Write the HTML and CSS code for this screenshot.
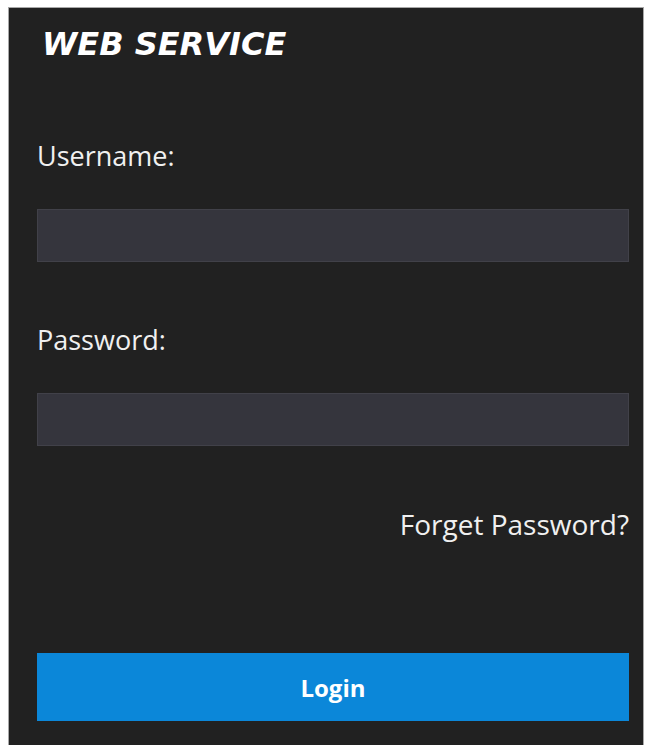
FILE: index.html
```html
<!DOCTYPE html>
<html lang="en">
<head>
    <meta charset="UTF-8">
    <meta name="viewport" content="width=device-width, initial-scale=1.0">
    <title>WEB SERVICE</title>
    <link rel="stylesheet" href="styles.css">
</head>
<body>

    <div class="login-panel">
        <div class="title">WEB SERVICE</div>

        <label for="username">Username:</label>
        <input type="text" id="username">

        <label for="password">Password:</label>
        <input type="password" id="password">

        <div class="forget-row">
            <a href="#" class="forget-link">Forget Password?</a>
        </div>

        <button class="login-btn">Login</button>
    </div>

</body>
</html>
```

FILE: styles.css
```css
body {
    margin: 0;
    background-color: #ffffff;
    font-family: 'Open Sans', 'Noto Sans', sans-serif;
}

.login-panel {
    background-color: #212121;
    border: 1px solid #a8a8a8;
    border-bottom: none;
    margin: 7px 4px 0 8px;
    padding: 17px 14px 30px 28px;
    height: 745px;
    box-sizing: border-box;
}

.title {
    font-family: 'DejaVu Sans', sans-serif;
    font-weight: bold;
    font-style: italic;
    font-size: 32px;
    color: #ffffff;
    margin-left: 5px;
    margin-bottom: 74px;
}

label {
    display: block;
    color: #f0f0f0;
    font-size: 27px;
    margin-bottom: 35px;
}

input[type="text"], input[type="password"] {
    display: block;
    width: 100%;
    height: 53px;
    box-sizing: border-box;
    background-color: #35353d;
    border: 1px solid #414149;
    color: #ffffff;
    font-size: 18px;
    padding: 0 10px;
    margin: 0 0 59px 0;
    outline: none;
}

.forget-row {
    text-align: right;
    margin-bottom: 110px;
}

.forget-link {
    color: #f0f0f0;
    font-size: 28px;
    text-decoration: none;
}

.login-btn {
    display: block;
    width: 100%;
    height: 68px;
    background-color: #0b87d9;
    color: #ffffff;
    font-family: 'Open Sans', sans-serif;
    font-weight: bold;
    font-size: 24px;
    border: none;
    cursor: pointer;
}
```
